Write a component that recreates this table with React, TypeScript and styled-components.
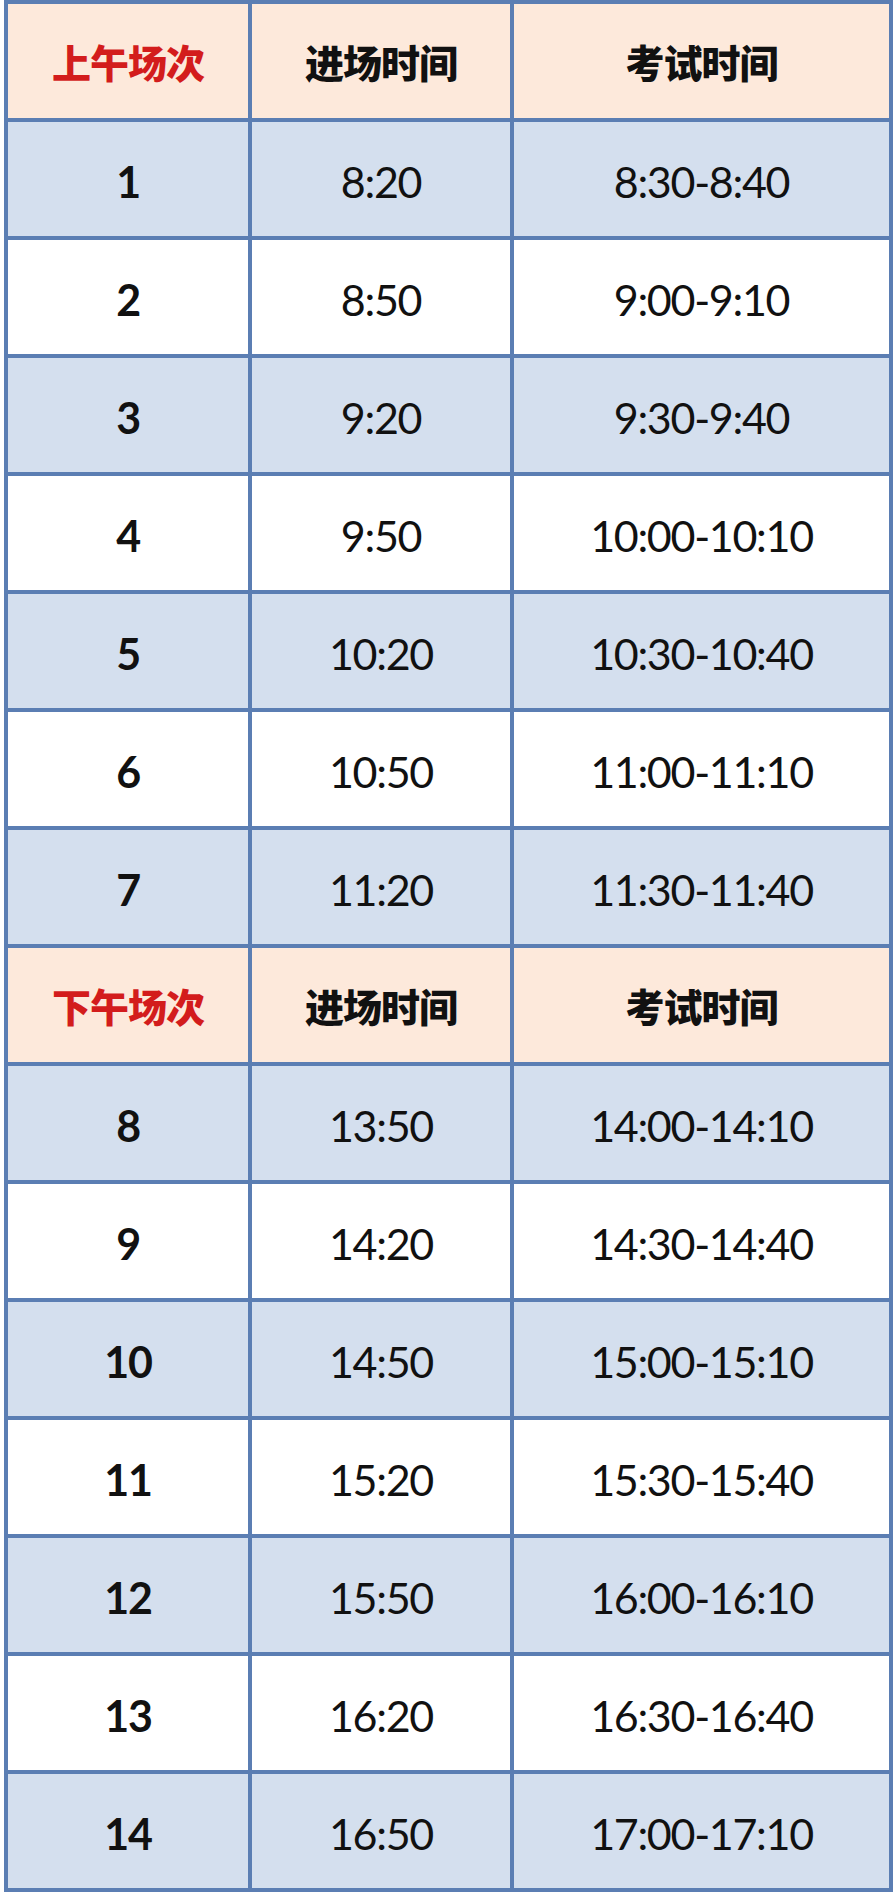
import React from 'react';
import styled, { createGlobalStyle } from 'styled-components';

const GlobalStyle = createGlobalStyle`
  html, body {
    margin: 0;
    padding: 0;
    background: #ffffff;
  }
`;

const Grid = styled.div`
  display: grid;
  grid-template-columns: 240px 258px 375px;
  grid-auto-rows: 114px;
  gap: 4px;
  padding: 4px;
  margin-left: 4px;
  width: 889px;
  box-sizing: border-box;
  background: #5b7eb3;
`;

const Cell = styled.div<{ $tone: 'head' | 'blue' | 'white' }>`
  display: flex;
  align-items: center;
  justify-content: center;
  background: ${(p) =>
    p.$tone === 'head' ? '#fde9db' : p.$tone === 'blue' ? '#d4dfee' : '#ffffff'};
`;

const HeadText = styled.span<{ $red?: boolean }>`
  font-family: "Noto Sans CJK SC", sans-serif;
  font-weight: 900;
  font-size: 39px;
  color: ${(p) => (p.$red ? '#d31c1c' : '#111111')};
  letter-spacing: -1px;
`;

const NumText = styled.span<{ $bold?: boolean }>`
  font-family: Lato, "Liberation Sans", sans-serif;
  font-weight: ${(p) => (p.$bold ? 700 : 400)};
  font-size: 43px;
  letter-spacing: -1.3px;
  padding-top: 5px;
  color: #111111;
`;

interface Slot {
  no: number;
  enter: string;
  exam: string;
}

const morning: Slot[] = [
  { no: 1, enter: '8:20', exam: '8:30-8:40' },
  { no: 2, enter: '8:50', exam: '9:00-9:10' },
  { no: 3, enter: '9:20', exam: '9:30-9:40' },
  { no: 4, enter: '9:50', exam: '10:00-10:10' },
  { no: 5, enter: '10:20', exam: '10:30-10:40' },
  { no: 6, enter: '10:50', exam: '11:00-11:10' },
  { no: 7, enter: '11:20', exam: '11:30-11:40' },
];

const afternoon: Slot[] = [
  { no: 8, enter: '13:50', exam: '14:00-14:10' },
  { no: 9, enter: '14:20', exam: '14:30-14:40' },
  { no: 10, enter: '14:50', exam: '15:00-15:10' },
  { no: 11, enter: '15:20', exam: '15:30-15:40' },
  { no: 12, enter: '15:50', exam: '16:00-16:10' },
  { no: 13, enter: '16:20', exam: '16:30-16:40' },
  { no: 14, enter: '16:50', exam: '17:00-17:10' },
];

const Header = ({ label }: { label: string }) => (
  <>
    <Cell $tone="head"><HeadText $red>{label}</HeadText></Cell>
    <Cell $tone="head"><HeadText>进场时间</HeadText></Cell>
    <Cell $tone="head"><HeadText>考试时间</HeadText></Cell>
  </>
);

const Rows = ({ list }: { list: Slot[] }) => (
  <>
    {list.map((s, idx) => {
      const tone = idx % 2 === 0 ? 'blue' : 'white';
      return (
        <React.Fragment key={s.no}>
          <Cell $tone={tone}><NumText $bold>{s.no}</NumText></Cell>
          <Cell $tone={tone}><NumText>{s.enter}</NumText></Cell>
          <Cell $tone={tone}><NumText>{s.exam}</NumText></Cell>
        </React.Fragment>
      );
    })}
  </>
);

export default function App() {
  return (
    <>
      <GlobalStyle />
      <Grid>
        <Header label="上午场次" />
        <Rows list={morning} />
        <Header label="下午场次" />
        <Rows list={afternoon} />
      </Grid>
    </>
  );
}
